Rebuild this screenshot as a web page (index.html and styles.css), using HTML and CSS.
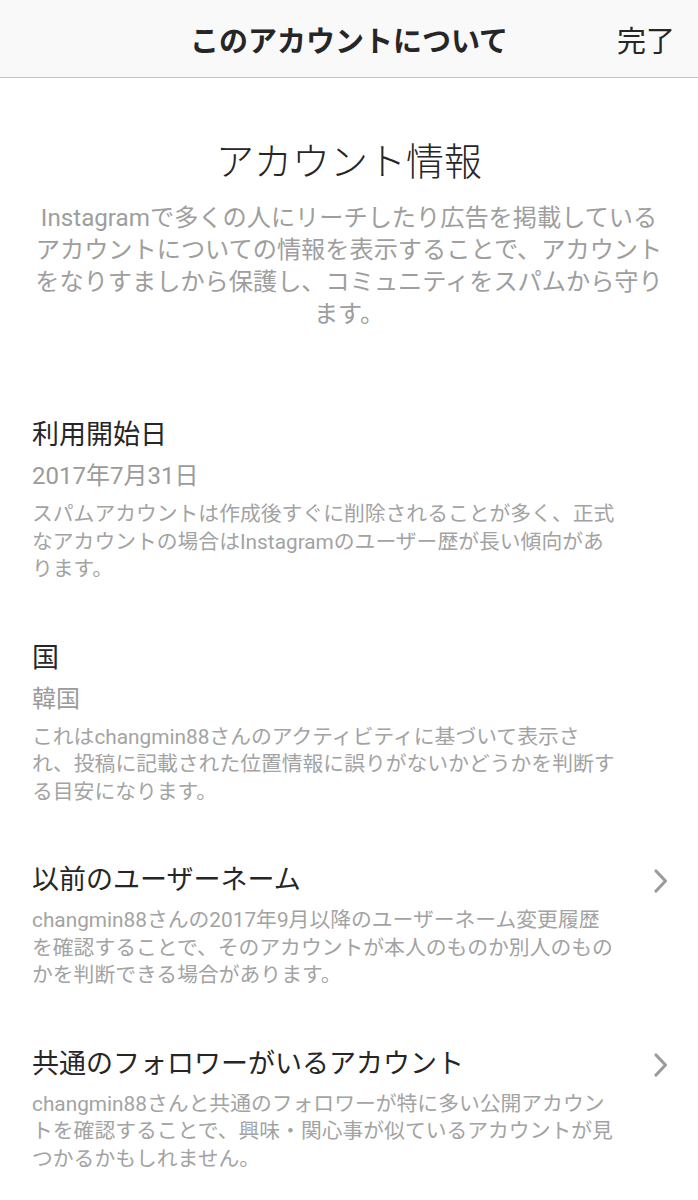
FILE: index.html
```html
<!DOCTYPE html>
<html lang="ja">
<head>
<meta charset="utf-8">
<title>このアカウントについて</title>
<link rel="stylesheet" href="styles.css">
</head>
<body>
<header class="topbar">
  <span class="topbar-side"></span>
  <h1 class="topbar-title">このアカウントについて</h1>
  <span class="topbar-side topbar-done">完了</span>
</header>
<main class="content">
  <section class="intro">
    <h2 class="intro-title">アカウント情報</h2>
    <p class="intro-text">Instagramで多くの人にリーチしたり広告を掲載している<br>アカウントについての情報を表示することで、アカウント<br>をなりすましから保護し、コミュニティをスパムから守り<br>ます。</p>
  </section>

  <section class="item">
    <div class="item-main">
      <h3 class="item-title">利用開始日</h3>
      <div class="item-value">2017年7月31日</div>
      <p class="item-desc">スパムアカウントは作成後すぐに削除されることが多く、正式<br>なアカウントの場合はInstagramのユーザー歴が長い傾向があ<br>ります。</p>
    </div>
  </section>

  <section class="item">
    <div class="item-main">
      <h3 class="item-title">国</h3>
      <div class="item-value">韓国</div>
      <p class="item-desc">これはchangmin88さんのアクティビティに基づいて表示さ<br>れ、投稿に記載された位置情報に誤りがないかどうかを判断す<br>る目安になります。</p>
    </div>
  </section>

  <section class="item">
    <div class="item-main">
      <h3 class="item-title">以前のユーザーネーム</h3>
      <p class="item-desc">changmin88さんの2017年9月以降のユーザーネーム変更履歴<br>を確認することで、そのアカウントが本人のものか別人のもの<br>かを判断できる場合があります。</p>
    </div>
    <svg class="chevron" viewBox="0 0 16 26" width="16" height="26"><polyline points="3,3 12.5,13 3,23" fill="none" stroke="#9b9b9b" stroke-width="3.2" stroke-linecap="round" stroke-linejoin="round"/></svg>
  </section>

  <section class="item last">
    <div class="item-main">
      <h3 class="item-title">共通のフォロワーがいるアカウント</h3>
      <p class="item-desc">changmin88さんと共通のフォロワーが特に多い公開アカウン<br>トを確認することで、興味・関心事が似ているアカウントが見<br>つかるかもしれません。</p>
    </div>
    <svg class="chevron" viewBox="0 0 16 26" width="16" height="26"><polyline points="3,3 12.5,13 3,23" fill="none" stroke="#9b9b9b" stroke-width="3.2" stroke-linecap="round" stroke-linejoin="round"/></svg>
  </section>
</main>
</body>
</html>
```
FILE: styles.css
```css
html, body {
  margin: 0;
  padding: 0;
  background: #ffffff;
  font-family: Roboto, "Noto Sans CJK JP", "Noto Sans", "Liberation Sans", sans-serif;
  color: #262626;
}

.topbar {
  height: 77px;
  background: #f9f9f9;
  border-bottom: 1px solid #c4c4c4;
  display: grid;
  grid-template-columns: 1fr auto 1fr;
  align-items: center;
}

.topbar-title {
  margin: 0;
  font-size: 29px;
  font-weight: 700;
  color: #262626;
}

.topbar-done {
  justify-self: end;
  padding-right: 23px;
  font-size: 29px;
  font-weight: 400;
  color: #262626;
}

.content {
  display: flex;
  flex-direction: column;
  border-bottom: 1px solid #dedede;
  padding-bottom: 30px;
}

.intro {
  padding: 61px 30px 0;
  text-align: center;
}

.intro-title {
  margin: 0;
  font-size: 38px;
  line-height: 46px;
  font-weight: 300;
  color: #262626;
}

.intro-text {
  margin: 17px 0 0;
  font-size: 24.2px;
  line-height: 32px;
  color: #9e9e9e;
}

.item {
  display: flex;
  align-items: flex-start;
  padding: 0 29px 0 32px;
  margin-top: 56px;
}

.intro + .item {
  margin-top: 87px;
}

.item-main {
  flex: 1;
}

.item-title {
  margin: 0;
  font-size: 27px;
  line-height: 36px;
  font-weight: 400;
  color: #262626;
}

.item-value {
  margin-top: 7px;
  font-size: 24px;
  line-height: 32px;
  color: #9b9b9b;
}

.item-desc {
  margin: 9px 0 0;
  font-size: 20.8px;
  line-height: 27.5px;
  color: #a3a3a3;
}

.chevron {
  flex: none;
  margin-top: 6px;
}
```
